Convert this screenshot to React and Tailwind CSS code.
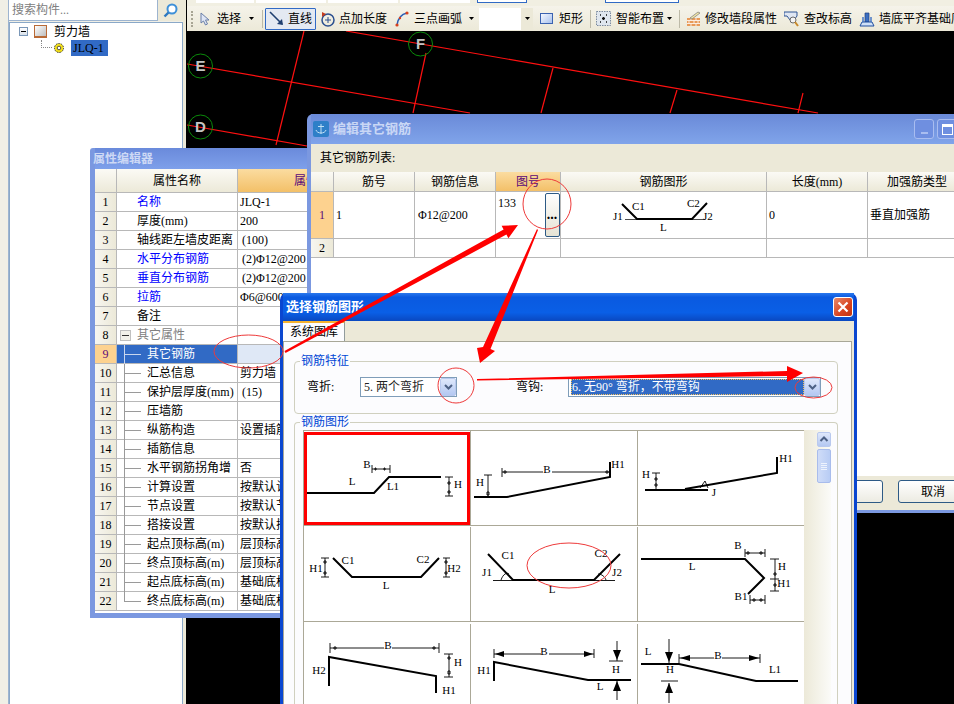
import React from "react";

const FONT = "font-['Liberation_Serif','Noto_Sans_CJK_SC',serif]";

const propRows = [
  ["1", "名称", "JLQ-1", "blue"],
  ["2", "厚度(mm)", "200", "top"],
  ["3", "轴线距左墙皮距离", "(100)", "top"],
  ["4", "水平分布钢筋", "(2)Φ12@200", "blue"],
  ["5", "垂直分布钢筋", "(2)Φ12@200", "blue"],
  ["6", "拉筋", "Φ6@600*600", "blue"],
  ["7", "备注", "", "top"],
  ["8", "其它属性", "", "group"],
  ["9", "其它钢筋", "", "active"],
  ["10", "汇总信息", "剪力墙", "sub"],
  ["11", "保护层厚度(mm)", "(15)", "sub"],
  ["12", "压墙筋", "", "sub"],
  ["13", "纵筋构造", "设置插筋", "sub"],
  ["14", "插筋信息", "", "sub"],
  ["15", "水平钢筋拐角增", "否", "sub"],
  ["16", "计算设置", "按默认计算设置", "sub"],
  ["17", "节点设置", "按默认节点设置", "sub"],
  ["18", "搭接设置", "按默认搭接设置", "sub"],
  ["19", "起点顶标高(m)", "层顶标高", "sub"],
  ["20", "终点顶标高(m)", "层顶标高", "sub"],
  ["21", "起点底标高(m)", "基础底标高", "sub"],
  ["22", "终点底标高(m)", "基础底标高", "last"],
];

function Chevron() {
  return (
    <svg width="11" height="8" viewBox="0 0 11 8">
      <path d="M2 2 L5.5 5.5 L9 2" fill="none" stroke="#4d6185" strokeWidth="2" />
    </svg>
  );
}

function DropBtn({ className }) {
  return (
    <div className={"flex items-center justify-center rounded-[2px] border border-[#b9c9ee] bg-[linear-gradient(180deg,#dfe8fb_0%,#b4c8f2_100%)] " + className}>
      <Chevron />
    </div>
  );
}

function Caret({ className }) {
  return (
    <svg className={className} width="5" height="3" viewBox="0 0 5 3">
      <path d="M0 0 H5 L2.5 3 Z" fill="#000" />
    </svg>
  );
}

function Sep({ className }) {
  return <div className={"h-[18px] w-px bg-[#bdbaa8] " + className} />;
}

function Toolbar() {
  return (
    <div className="flex h-[25px] items-center overflow-hidden bg-[linear-gradient(180deg,#f5f3ea_0%,#ece9d8_100%)] text-[12px] text-black whitespace-nowrap">
      <div className="ml-[4px] h-[16px] w-[2px] border-l-2 border-dotted border-[#a8a594]" />
      <svg className="ml-[7px]" width="10" height="14" viewBox="0 0 10 14">
        <path d="M1 1 L1 11 L3.5 9 L5.5 13 L7.5 12 L5.5 8 L9 8 Z" fill="#dfe6f5" stroke="#6a7fa8" />
      </svg>
      <span className="ml-[7px] w-[24px]">选择</span>
      <Caret className="ml-[8px]" />
      <Sep className="ml-[8px]" />
      <div className="ml-[2px] flex h-[22px] w-[51px] items-center rounded-[1px] border border-[#316ac5] bg-[#e4e9f2]">
        <svg className="ml-[3px]" width="16" height="16" viewBox="0 0 16 16">
          <path d="M1 1 L13 13" stroke="#1f3f70" strokeWidth="1.6" />
          <path d="M14 14 L8 13 L13 8 Z" fill="#1f3f70" />
        </svg>
        <span className="ml-[3px]">直线</span>
      </div>
      <svg className="ml-[4px]" width="16" height="16" viewBox="0 0 16 16">
        <circle cx="8" cy="9" r="6" fill="none" stroke="#2a4f8f" strokeWidth="1.5" />
        <path d="M8 6 V12 M5 9 H11" stroke="#2a4f8f" />
        <path d="M2 1 L6 3 L2 6 Z" fill="#c43c1c" />
      </svg>
      <span className="ml-[3px] w-[48px]">点加长度</span>
      <svg className="ml-[8px]" width="14" height="16" viewBox="0 0 14 16">
        <path d="M2 14 C3 7 7 3 12 2" fill="none" stroke="#2a5fb8" strokeWidth="1.6" />
        <circle cx="2" cy="14" r="1.6" fill="#d8401c" />
        <circle cx="12" cy="2" r="1.6" fill="#d8401c" />
        <circle cx="5" cy="7" r="1.2" fill="#d8401c" />
      </svg>
      <span className="ml-[5px] w-[48px]">三点画弧</span>
      <Caret className="ml-[7px]" />
      <div className="ml-[5px] flex h-[22px] w-[54px] items-center justify-end bg-white">
        <div className="flex h-full w-[12px] items-center justify-center bg-[#ece9d8]">
          <Caret />
        </div>
      </div>
      <div className="ml-[7px] h-[11px] w-[13px] border border-[#3a62b0] bg-[linear-gradient(135deg,#f4f7fd_0%,#a9c2ee_100%)]" />
      <span className="ml-[6px] w-[24px]">矩形</span>
      <Sep className="ml-[7px]" />
      <svg className="ml-[5px]" width="15" height="15" viewBox="0 0 15 15">
        <rect x="0.5" y="0.5" width="14" height="14" fill="#dfe6ee" stroke="#7b8ba0" strokeDasharray="1.5 1" />
        <path d="M4 4 H5 M10 4 H11 M4 11 H5 M10 11 H11 M7.5 6 V9 M6 7.5 H9" stroke="#111" strokeWidth="1.4" />
      </svg>
      <span className="ml-[5px] w-[48px]">智能布置</span>
      <Caret className="ml-[3px]" />
      <Sep className="ml-[7px]" />
      <svg className="ml-[6px]" width="15" height="16" viewBox="0 0 15 16">
        <path d="M1 7 H14 V15 H1 Z" fill="#e89a58" />
        <path d="M1 9.5 H14 M1 12.5 H14 M5 7 V9.5 M10 7 V9.5 M3 9.5 V12.5 M8 9.5 V12.5 M12 9.5 V12.5 M5 12.5 V15 M10 12.5 V15" stroke="#fff" strokeWidth="0.8" />
        <path d="M4 7 L12 1 L14 2 L6 8 Z" fill="#f2e7a8" stroke="#777" strokeWidth="0.7" />
      </svg>
      <span className="ml-[4px] w-[72px]">修改墙段属性</span>
      <svg className="ml-[7px]" width="15" height="16" viewBox="0 0 15 16">
        <path d="M0 1 H13 V5 L10 9 H6 L3 5 H0 Z" fill="#dfe6f2" stroke="#2f5595" />
        <circle cx="9" cy="9" r="3" fill="#f4f4f4" stroke="#6b6b6b" />
        <path d="M11 11 L14 15" stroke="#c98a2c" strokeWidth="2" />
      </svg>
      <span className="ml-[5px] w-[48px]">查改标高</span>
      <svg className="ml-[7px]" width="16" height="16" viewBox="0 0 16 16">
        <path d="M6 2 H10 V11 H6 Z" fill="#3b6fc2" stroke="#1f3f80" strokeWidth="0.7" />
        <path d="M3 11 H13 L15 15 H1 Z" fill="#cfe0f7" stroke="#1f4fa0" />
        <path d="M4 6 V11 M12 6 V11" stroke="#3b6fc2" strokeWidth="1.4" />
      </svg>
      <span className="ml-[4px]">墙底平齐基础底</span>
    </div>
  );
}

function GridLabel({ x, y, t }) {
  return (
    <g>
      <circle cx={x} cy={y} r="12" fill="none" stroke="#0a8a0a" strokeWidth="1" />
      <text x={x} y={y + 5} textAnchor="middle" fontSize="15" fontWeight="700" fontFamily="Liberation Sans, sans-serif" fill="#c4c4c4">{t}</text>
    </g>
  );
}

function Canvas() {
  return (
    <div className="relative flex-1 bg-black">
      <svg className="absolute left-0 top-0" width="767" height="673" viewBox="187 31 767 673">
        <g stroke="#ff1010" strokeWidth="1.2" fill="none">
          <path d="M187 64 L470 113" />
          <path d="M346 31 L818 113" />
          <path d="M187 125 L307 146" />
          <path d="M304 31 L276 145" />
          <path d="M426 53 L413 113" />
          <path d="M553 68 L541 113" />
          <path d="M677 90 L670 113" />
          <path d="M803 93 L798 113" />
        </g>
        <GridLabel x={200.5} y={66} t="E" />
        <GridLabel x={200.5} y={127} t="D" />
        <GridLabel x={420.5} y={44} t="F" />
      </svg>
    </div>
  );
}

function LeftPanel() {
  return (
    <div className="flex h-full w-[186px] flex-none bg-[#f0efe6]">
      <div className="ml-[8px] flex w-[175px] flex-col border-l border-[#9db4d0]">
        <div className="flex h-[22px] flex-none">
          <div className="flex h-[21px] w-[149px] items-center border-b border-r border-[#9db4d0] bg-white pl-[3px] text-[12px] text-[#808080]">搜索构件...</div>
          <div className="flex h-[21px] flex-1 items-center justify-center bg-[#ece9d8]">
            <svg width="15" height="15" viewBox="0 0 15 15">
              <circle cx="9" cy="6" r="4.5" fill="#fff" stroke="#3e90d8" strokeWidth="2" />
              <path d="M5.5 9.5 L1.5 13.5" stroke="#2d78c0" strokeWidth="2.4" />
            </svg>
          </div>
        </div>
        <div className="flex-1 border-l border-r border-t border-[#8aa8c8] bg-white text-[12px] text-black">
          <div className="flex h-[17px] items-center pl-[9px]">
            <div className="flex h-[9px] w-[9px] items-center justify-center border border-[#7a97b8] bg-[linear-gradient(180deg,#fff_0%,#d8e0ea_100%)]">
              <div className="h-px w-[5px] bg-black" />
            </div>
            <div className="ml-[6px] h-[13px] w-[13px] border-b-2 border-l border-r border-t border-[#b96a36] bg-[linear-gradient(135deg,#fff_0%,#bdbdbd_100%)]" />
            <span className="ml-[7px]">剪力墙</span>
          </div>
          <div className="flex h-[16px] items-center pl-[31px]">
            <div className="mb-[8px] h-[8px] w-[11px] border-b border-l border-dotted border-[#888]" />
            <svg className="ml-[1px]" width="12" height="12" viewBox="0 0 12 12">
              <circle cx="6" cy="6" r="4.5" fill="#f6e21a" stroke="#333" strokeDasharray="1.5 1" />
              <circle cx="6" cy="6" r="1.8" fill="#fff" stroke="#333" strokeWidth="0.8" />
            </svg>
            <span className="ml-[6px] flex h-[16px] w-[37px] items-center bg-[#316ac5] pl-[2px] text-black">JLQ-1</span>
          </div>
        </div>
      </div>
      <div className="w-[3px] bg-[#ece9d8]" />
    </div>
  );
}

function PropRow({ row }) {
  const [n, name, val, kind] = row;
  const active = kind === "active";
  const tree = active || kind === "sub" || kind === "last";
  return (
    <div className="grid h-[19px] grid-cols-[22px_121px_1fr]">
      <div className={"flex items-center justify-center border-b border-r border-[#b8b8b8] " + (active ? "bg-[#fdd28f] text-[#5a0a7a]" : "bg-[linear-gradient(90deg,#f7f6f0_0%,#ece9d8_100%)] text-black")}>{n}</div>
      <div className={"relative flex items-center whitespace-nowrap border-b border-r border-[#b8b8b8] " + (active ? "bg-[#316ac5] pl-[30px] text-white" : tree ? "pl-[30px] text-black" : kind === "group" ? "pl-[20px] text-[#808080]" : kind === "blue" ? "pl-[20px] text-[#0000ff]" : "pl-[20px] text-black")}>
        {tree && <div className={"absolute left-[7px] top-0 w-px " + (kind === "last" ? "h-[10px] bg-[#9a9a9a]" : "h-[19px] " + (active ? "bg-[#c8d6ee]" : "bg-[#9a9a9a]"))} />}
        {tree && <div className={"absolute left-[8px] top-[9px] h-px w-[16px] " + (active ? "bg-[#c8d6ee]" : "bg-[#9a9a9a]")} />}
        {kind === "group" && (
          <div className="absolute left-[3px] top-[4px] flex h-[11px] w-[11px] items-center justify-center border border-[#c0c0c0] bg-[#f2f1ea]">
            <div className="h-px w-[7px] bg-[#333]" />
          </div>
        )}
        {name}
      </div>
      <div className={"flex items-center overflow-hidden whitespace-nowrap border-b border-[#b8b8b8] text-black " + (active ? "bg-[#dfe8f6] pl-[2px]" : val.startsWith("(") ? "pl-[4px]" : "pl-[2px]")}>{val}</div>
    </div>
  );
}

function PropertyWindow() {
  return (
    <div className="absolute left-[90px] top-[148px] flex h-[470px] w-[240px] flex-col rounded-t-[3px] bg-[#7b98e0] px-[5px] pb-[5px]">
      <div className="flex h-[21px] flex-none items-center bg-[linear-gradient(180deg,#6a8adb_0%,#7ea0ea_100%)] text-[12px] font-bold text-[#cdd9f5]">
        <span className="-ml-[2px]">属性编辑器</span>
      </div>
      <div className="flex-1 bg-white text-[12px]">
        <div className="grid h-[24px] grid-cols-[22px_121px_1fr]">
          <div className="border-b border-r border-[#b8b8b8] bg-[linear-gradient(180deg,#fbfaf5_0%,#ece9d8_100%)]" />
          <div className="flex items-center justify-center border-b border-r border-[#b8b8b8] bg-[linear-gradient(180deg,#fbfaf5_0%,#ece9d8_100%)] text-black">属性名称</div>
          <div className="flex items-center overflow-hidden whitespace-nowrap border-b border-[#b8b8b8] bg-[linear-gradient(180deg,#fbdca0_0%,#f3c068_100%)] pl-[56px] text-[#5a0a7a]">属性值</div>
        </div>
        {propRows.map((r) => (
          <PropRow key={r[0]} row={r} />
        ))}
      </div>
    </div>
  );
}

function RebarPreview() {
  return (
    <svg width="205" height="46" viewBox="561 192 205 46">
      <path d="M622 204 L637 219 L692 219 L707 203" fill="none" stroke="#000" strokeWidth="2" />
      <path d="M625 219.5 H705" stroke="#000" strokeWidth="0.7" />
      <g fontFamily="Liberation Serif, serif" fontSize="11" fill="#000">
        <text x="632" y="210">C1</text>
        <text x="687" y="207">C2</text>
        <text x="613" y="220">J1</text>
        <text x="703" y="220">J2</text>
        <text x="660" y="231">L</text>
      </g>
    </svg>
  );
}

function EditWindow() {
  const th = "flex items-center justify-center border-b border-r border-[#b8b8b8] bg-[linear-gradient(180deg,#fbfaf5_0%,#ece9d8_100%)]";
  const td = "flex items-center border-b border-r border-[#b8b8b8]";
  const cols = "grid grid-cols-[23px_81px_81px_65px_206px_101px_1fr]";
  return (
    <div className="absolute left-[307px] top-[114px] flex h-[399px] w-[670px] flex-col rounded-t-[6px] bg-[#7b98e0] px-[4px] pb-[3px] text-[12px]">
      <div className="flex h-[30px] flex-none items-center whitespace-nowrap bg-[linear-gradient(180deg,#6a8ad8_0%,#80a4ea_100%)]">
        <svg className="ml-[2px] flex-none" width="16" height="16" viewBox="0 0 16 16">
          <rect width="16" height="16" rx="2" fill="#2e7fc8" />
          <path d="M8 3 V13 M3 9 C4 13 12 13 13 9 M5 5.5 H11" fill="none" stroke="#bfe0f5" />
        </svg>
        <span className="ml-[4px] w-[78px] flex-none text-[13px] font-bold text-[#c9d7f5]">编辑其它钢筋</span>
        <div className="ml-[503px] flex h-[20px] w-[20px] flex-none items-end justify-center rounded-[3px] border border-[#a9bdf0] bg-[#6f8fe0] pb-[4px]">
          <div className="h-[2px] w-[7px] bg-[#a9bdf0]" />
        </div>
        <div className="ml-[3px] flex h-[20px] w-[20px] flex-none items-center justify-center rounded-[3px] border border-[#a9bdf0] bg-[#6f8fe0]">
          <div className="h-[11px] w-[11px] border border-t-[3px] border-white" />
        </div>
      </div>
      <div className="flex h-[28px] flex-none items-center bg-[#ece9d8] pl-[9px] text-black">其它钢筋列表:</div>
      <div className="flex flex-1 flex-col bg-white">
        <div className={cols + " h-[20px] flex-none"}>
          <div className={th} />
          <div className={th}>筋号</div>
          <div className={th}>钢筋信息</div>
          <div className="flex items-center justify-center border-b border-r border-[#b8b8b8] bg-[linear-gradient(180deg,#fbdca0_0%,#f3c068_100%)] text-[#5a0a7a]">图号</div>
          <div className={th}>钢筋图形</div>
          <div className={th}>长度(mm)</div>
          <div className={th + " justify-start pl-[19px]"}>加强筋类型</div>
        </div>
        <div className={cols + " h-[47px] flex-none text-black"}>
          <div className="flex items-center justify-center border-b border-r border-[#b8b8b8] bg-[#fdd28f] text-[#5a0a7a]">1</div>
          <div className={td + " pl-[2px]"}>1</div>
          <div className={td + " pl-[3px]"}>Φ12@200</div>
          <div className="flex border-b border-r border-[#b8b8b8] pl-[2px]">
            <span className="mt-[2px]">133</span>
            <div className="ml-auto mr-[0.5px] mt-[1px] flex h-[44px] w-[15px] items-center justify-center rounded-[2px] border border-[#2d5a85] bg-[linear-gradient(180deg,#fefefe_0%,#e6e3d4_100%)] text-[14px] font-bold leading-none">...</div>
          </div>
          <div className="border-b border-r border-[#b8b8b8]"><RebarPreview /></div>
          <div className={td + " pl-[2px]"}>0</div>
          <div className={td + " pl-[2px]"}>垂直加强筋</div>
        </div>
        <div className={cols + " h-[19px] flex-none text-black"}>
          <div className="flex items-center justify-center border-b border-r border-[#b8b8b8] bg-[linear-gradient(90deg,#f7f6f0_0%,#ece9d8_100%)]">2</div>
          <div className={td} />
          <div className={td} />
          <div className={td} />
          <div className={td} />
          <div className={td} />
          <div className={td} />
        </div>
        <div className="flex-1" />
        <div className="flex h-[34px] flex-none items-center bg-[#ece9d8] pb-[3px]">
          <div className="ml-[490px] flex h-[23px] w-[82px] items-center justify-center rounded-[3px] border border-[#2d5a85] bg-[linear-gradient(180deg,#fff_0%,#ecebe2_100%)] text-black">确定</div>
          <div className="ml-[15px] flex h-[23px] w-[70px] items-center justify-center rounded-[3px] border border-[#2d5a85] bg-[linear-gradient(180deg,#fff_0%,#ecebe2_100%)] text-black">取消</div>
        </div>
      </div>
    </div>
  );
}

function Dim({ d }) {
  return <path d={d} fill="none" stroke="#000" strokeWidth="0.9" />;
}

function Lab({ x, y, t }) {
  return (
    <text x={x} y={y + 4} textAnchor="middle" fontFamily="Liberation Serif, serif" fontSize="11" fill="#000">{t}</text>
  );
}

function Cell({ x, y, w, children }) {
  return (
    <div className="h-[95px] border-b border-r border-[#aba897]">
      <svg width={w} height="94" viewBox={`${x} ${y} ${w} 94`}>
        <g>{children}</g>
      </svg>
    </div>
  );
}

const P = ({ d }) => <path d={d} fill="none" stroke="#000" strokeWidth="2" />;

function ShapeGrid() {
  return (
    <div className="grid w-[501px] grid-cols-[167px_167px_167px] border-l border-t border-[#aba897] bg-white">
      <div className="relative h-[95px] border-b border-r border-[#aba897]">
        <div className="absolute left-0 top-[1px] h-[93px] w-[166px] border-[3px] border-[#ff0000]" />
        <svg width="166" height="94" viewBox="304 431 166 94">
          <P d="M307 493 H374 L389 477 H441" />
          <Dim d="M372 465 V473 M390 465 V473 M372 469 H390 M445 477 H453 M445 496 H453 M449 477 V496" />
          <Dim d="M375 468 h1 v2 h-1z M384 468 h1 v2 h-1z M448 482 h2 v2 h-2z M448 491 h2 v2 h-2z" />
          <Lab x={352} y={481} t="L" />
          <Lab x={367} y={464} t="B" />
          <Lab x={393} y={486} t="L1" />
          <Lab x={458} y={484} t="H" />
        </svg>
      </div>
      <Cell x={471} y={431} w={166}>
        <P d="M474 497 H507 L610 477 V462" />
        <Dim d="M502 468 V477 M502 472 H543 M552 472 H610 M484 475 H492 M488 475 V497" />
        <Dim d="M504 471 h2 v2 h-2z M606 471 h2 v2 h-2z M487 492 h2 v3 h-2z" />
        <Lab x={547} y={469} t="B" />
        <Lab x={480} y={482} t="H" />
        <Lab x={618} y={464} t="H1" />
      </Cell>
      <Cell x={638} y={431} w={165}>
        <P d="M645 490 H708 M685 489 L777 473 V457" />
        <Dim d="M652 473 H660 M656 473 V489 M700 488 L705 481 L708 488" />
        <Dim d="M655 478 h2 v2 h-2z M655 484 h2 v2 h-2z" />
        <Lab x={786} y={458} t="H1" />
        <Lab x={646} y={474} t="H" />
        <Lab x={714} y={492} t="J" />
      </Cell>
      <Cell x={304} y={526} w={166}>
        <P d="M333 557 L352 576 H421 L439 557" />
        <Dim d="M321 557 H329 M321 576 H329 M325 557 V576 M443 557 H450 M443 576 H450 M446 557 V576" />
        <Dim d="M324 560 h2 v2 h-2z M324 571 h2 v2 h-2z M445 560 h2 v2 h-2z M445 571 h2 v2 h-2z" />
        <Lab x={348} y={559} t="C1" />
        <Lab x={423} y={558} t="C2" />
        <Lab x={316} y={567} t="H1" />
        <Lab x={454} y={567} t="H2" />
        <Lab x={386} y={584} t="L" />
      </Cell>
      <Cell x={471} y={526} w={166}>
        <P d="M488 553 L513 579 H594 L620 553" />
        <Dim d="M493 579.5 H615 M501 579 C503 573 507 571 509 573 M598 573 C602 573 605 576 606 579" />
        <Lab x={508} y={554} t="C1" />
        <Lab x={601} y={552} t="C2" />
        <Lab x={487} y={571} t="J1" />
        <Lab x={617} y={571} t="J2" />
        <Lab x={552} y={588} t="L" />
      </Cell>
      <Cell x={638} y={526} w={165}>
        <P d="M641 558 H745 L764 577 L748 593" />
        <Dim d="M745 548 V556 M765 548 V556 M745 552 H765 M750 594 V603 M765 594 V603 M750 599 H765 M770 558 H779 M770 578 H779 M770 590 H779 M775 558 V590" />
        <Dim d="M747 551 h2 v2 h-2z M760 551 h2 v2 h-2z M753 598 h2 v2 h-2z M760 598 h2 v2 h-2z M774 572 h2 v2 h-2z M774 583 h2 v2 h-2z" />
        <Lab x={692} y={565} t="L" />
        <Lab x={738} y={544} t="B" />
        <Lab x={741} y={595} t="B1" />
        <Lab x={782} y={565} t="H" />
        <Lab x={784} y={582} t="H1" />
      </Cell>
      <Cell x={304} y={621} w={166}>
        <P d="M329 683 V654 L436 673 V690" />
        <Dim d="M330 640 V650 M439 640 V650 M330 645 H384 M392 645 H439 M444 651 H453 M444 674 H453 M449 651 V674" />
        <Dim d="M334 644 h2 v2 h-2z M433 644 h2 v2 h-2z M448 654 h2 v2 h-2z M448 668 h2 v3 h-2z" />
        <Lab x={388} y={642} t="B" />
        <Lab x={319} y={667} t="H2" />
        <Lab x={458} y={659} t="H" />
        <Lab x={449} y={687} t="H1" />
      </Cell>
      <Cell x={471} y={621} w={166}>
        <P d="M494 678 V659 L588 677 H631" />
        <Dim d="M494 646 V655 M594 646 V655 M494 651 H541 M549 651 H594 M609 658 H623 M617 638 V658 M617 677 V697" />
        <path d="M495 651 L504 648 V654 Z M593 651 L584 648 V654 Z M617 657 L613 647 H621 Z M617 678 L613 688 H621 Z" fill="#000" />
        <Lab x={544} y={648} t="B" />
        <Lab x={484} y={667} t="H1" />
        <Lab x={616} y={666} t="H" />
        <Lab x={600} y={683} t="L" />
      </Cell>
      <Cell x={638} y={621} w={165}>
        <P d="M641 661 H679 L756 678 H798" />
        <Dim d="M679 651 V660 M760 651 V660 M679 655 H714 M722 655 H760 M669 636 V660 M661 678 H678 M669 680 V700" />
        <path d="M680 655 L690 652 V658 Z M759 655 L749 652 V658 Z M669 659 L665 649 H673 Z M669 680 L665 690 H673 Z" fill="#000" />
        <Lab x={648} y={648} t="L" />
        <Lab x={718} y={652} t="B" />
        <Lab x={670} y={666} t="H" />
        <Lab x={775} y={666} t="L1" />
      </Cell>
    </div>
  );
}

function SelectDialog() {
  return (
    <div className="absolute left-[280px] top-[293px] flex h-[500px] w-[577px] flex-col rounded-t-[7px] bg-[#0a46d0] px-[3px] text-[12px]">
      <div className="flex h-[28px] flex-none items-center justify-between bg-[linear-gradient(180deg,#2a78ee_0%,#0a5ae0_15%,#0a5fe6_70%,#0a48c0_100%)] pl-[3px] pr-[1px]">
        <span className="text-[13px] font-bold text-white">选择钢筋图形</span>
        <div className="flex h-[20px] w-[20px] items-center justify-center rounded-[3px] border border-white bg-[linear-gradient(135deg,#e88a6a_0%,#d8431f_60%,#c23410_100%)]">
          <svg width="12" height="12" viewBox="0 0 12 12">
            <path d="M1.5 1.5 L10.5 10.5 M10.5 1.5 L1.5 10.5" stroke="#fff" strokeWidth="2.2" />
          </svg>
        </div>
      </div>
      <div className="flex flex-1 flex-col bg-[#ece9d8] pr-[2px]">
        <div className="flex h-[20px] flex-none">
          <div className="flex w-[62px] items-center border-r border-t-[2px] border-r-[#919b9c] border-t-[#f5b330] bg-[#fcfcfe] pl-[7px] text-black">系统图库</div>
        </div>
        <div className="flex-1 border-l border-r border-t border-[#a8a798] bg-[#fcfcfe] pl-[10px] pr-[13px] pt-[19px]">
          <div className="relative h-[53px] rounded-[4px] border border-[#d0d0bf]">
            <span className="absolute left-[5px] top-[-8px] bg-[#fcfcfe] px-px leading-[14px] text-[#0046d5]">钢筋特征</span>
            <div className="flex h-full items-center pb-[1px] text-black">
              <span className="ml-[12px] w-[53px]">弯折:</span>
              <div className="flex h-[20px] w-[97px] items-center justify-between border border-[#7f9db9] bg-white pl-[3px]">
                <span className="text-[#222]">5. 两个弯折</span>
                <DropBtn className="h-[18px] w-[16px]" />
              </div>
              <span className="ml-[59px] w-[52px]">弯钩:</span>
              <div className="flex h-[20px] w-[253px] items-center border border-[#7f9db9] bg-white pl-[2px]">
                <div className="flex h-[16px] flex-1 items-center whitespace-pre border border-dotted border-[#f0c060] bg-[#316ac5] text-white">6. 无90° 弯折，不带弯钩</div>
                <DropBtn className="h-[18px] w-[16px]" />
              </div>
            </div>
          </div>
          <div className="relative mt-[8px] h-[300px] rounded-t-[4px] border-l border-r border-t border-[#d0d0bf] pl-[8px] pt-[7px]">
            <span className="absolute left-[5px] top-[-8px] bg-[#fcfcfe] px-px leading-[14px] text-[#0046d5]">钢筋图形</span>
            <div className="flex">
              <ShapeGrid />
              <div className="flex h-[290px] w-[27px] flex-col items-end bg-[linear-gradient(90deg,#ece9d8_0%,#fbfbf8_100%)] pt-[2px]">
                <div className="flex h-[15px] w-[14px] items-center justify-center rounded-[2px] border border-[#b9c9ee] bg-[linear-gradient(180deg,#dfe8fb_0%,#b4c8f2_100%)]">
                  <svg width="10" height="7" viewBox="0 0 10 7">
                    <path d="M1.5 5 L5 1.5 L8.5 5" fill="none" stroke="#4d6185" strokeWidth="2" />
                  </svg>
                </div>
                <div className="mt-[2px] flex h-[34px] w-[14px] flex-col items-center justify-center gap-[1px] rounded-[2px] border border-[#a8bcec] bg-[linear-gradient(90deg,#cfdcf8_0%,#b8ccf4_100%)]">
                  <div className="h-px w-[6px] bg-[#eef3fd]" />
                  <div className="h-px w-[6px] bg-[#eef3fd]" />
                  <div className="h-px w-[6px] bg-[#eef3fd]" />
                  <div className="h-px w-[6px] bg-[#eef3fd]" />
                </div>
              </div>
            </div>
          </div>
        </div>
      </div>
    </div>
  );
}

function Annotations() {
  return (
    <svg className="pointer-events-none absolute left-0 top-0" width="954" height="704" viewBox="0 0 954 704">
      <g fill="none" stroke="#ee3a3a" strokeWidth="1">
        <ellipse cx="248.5" cy="351.5" rx="34.5" ry="16.5" />
        <ellipse cx="547" cy="204" rx="24" ry="25" />
        <ellipse cx="456" cy="385.5" rx="18" ry="17.5" />
        <ellipse cx="813.5" cy="387.5" rx="18.5" ry="10.5" />
        <ellipse cx="569" cy="565.5" rx="42" ry="22.5" />
      </g>
      <g fill="#ff0000">
        <path d="M284.5 351 L503.6 229.4 L501.6 225.8 L518 225 L508.4 238.2 L506.4 234.6 L285.5 353 Z" />
        <path d="M537 229 L538 230 L490.5 349 L495 351 L480 363 L477 348 L483 347 Z" />
        <path d="M477 379 L787 371 L787 366 L803 373 L787 382 L787 376 L477 380.5 Z" />
      </g>
    </svg>
  );
}

export default function App() {
  return (
    <div className={"relative flex h-[704px] w-[954px] overflow-hidden bg-black " + FONT}>
      <LeftPanel />
      <div className="flex h-full flex-1 flex-col pl-px">
        <div className="flex h-[6px] flex-none items-start gap-[2px] bg-[#f1efe2] pl-[9px]">
          <div className="h-[3px] w-[58px] bg-white" />
          <div className="h-[3px] w-[70px] bg-white" />
          <div className="h-[3px] w-[70px] bg-white" />
          <div className="h-[3px] w-[70px] bg-white" />
          <div className="ml-[5px] h-[3px] w-[50px] border-b border-l border-r border-[#316ac5] bg-white" />
          <div className="ml-[76px] h-[3px] w-[74px] border-b border-l border-r border-[#316ac5] bg-white" />
        </div>
        <Toolbar />
        <Canvas />
      </div>
      <PropertyWindow />
      <EditWindow />
      <SelectDialog />
      <Annotations />
    </div>
  );
}
